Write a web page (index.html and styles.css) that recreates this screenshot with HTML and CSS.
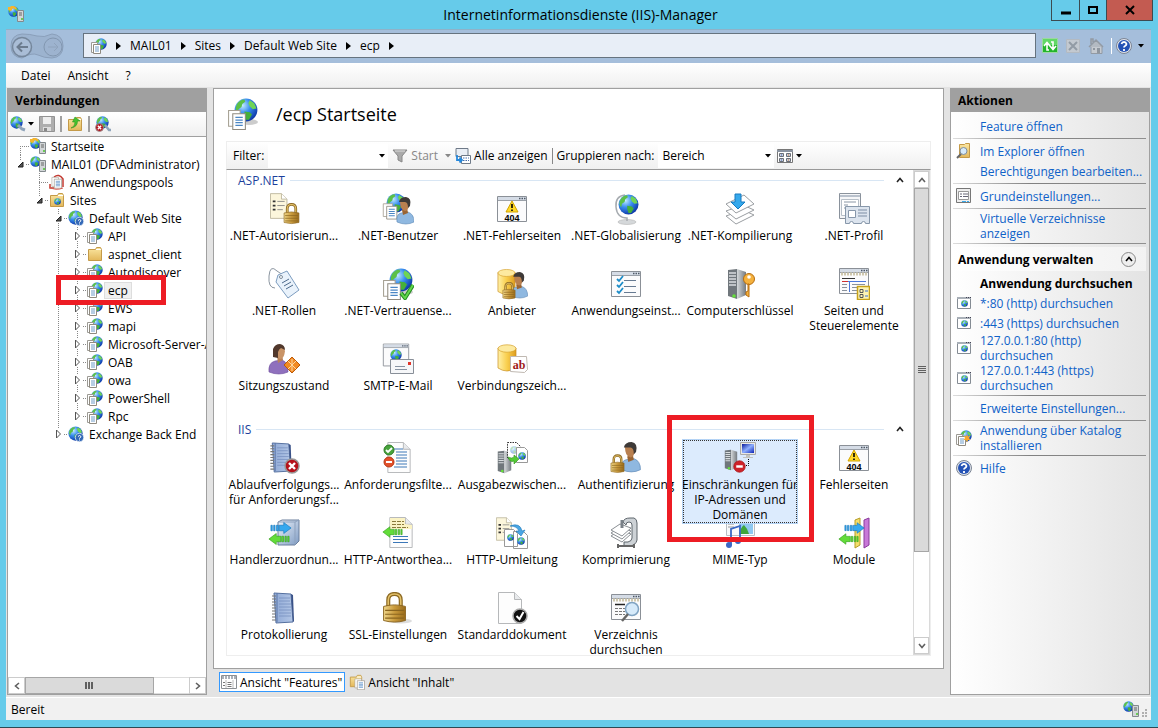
FILE: index.html
```html
<!DOCTYPE html>
<html lang="de">
<head>
    <meta charset="UTF-8">
    <meta name="viewport" content="width=device-width, initial-scale=1.0">
    <title>Internetinformationsdienste (IIS)-Manager</title>
    <link rel="stylesheet" href="styles.css">
</head>
<body>
    <!-- Symbole -->
    <svg class="sprite" aria-hidden="true">
        <defs>
            <radialGradient id="gGlobe" cx="0.35" cy="0.3" r="0.75">
                <stop offset="0" stop-color="#c4ebff"/><stop offset="0.45" stop-color="#3a8ff0"/><stop offset="1" stop-color="#0b34a4"/>
            </radialGradient>
            <linearGradient id="gGold"><stop offset="0" stop-color="#f0d78a"/><stop offset="0.5" stop-color="#c99a3c"/><stop offset="1" stop-color="#9a6c1c"/></linearGradient>
            <linearGradient id="gDb"><stop offset="0" stop-color="#fff0a8"/><stop offset="0.5" stop-color="#f9cf4e"/><stop offset="1" stop-color="#dd9c1e"/></linearGradient>
            <linearGradient id="gServer"><stop offset="0" stop-color="#d4d8da"/><stop offset="1" stop-color="#747a80"/></linearGradient>
            <linearGradient id="gBook"><stop offset="0" stop-color="#8fa9d6"/><stop offset="1" stop-color="#b4c7e6"/></linearGradient>
            <linearGradient id="gFolder" x2="0" y2="1"><stop offset="0" stop-color="#fbe7a2"/><stop offset="1" stop-color="#e3b75a"/></linearGradient>
            <linearGradient id="gBox" x2="1" y2="1"><stop offset="0" stop-color="#eef3fa"/><stop offset="1" stop-color="#7f9cc4"/></linearGradient>
            <linearGradient id="gScreen" x2="1" y2="1"><stop offset="0" stop-color="#0a1a9c"/><stop offset="0.5" stop-color="#8fb0ff"/><stop offset="1" stop-color="#0b22b4"/></linearGradient>
        </defs>
        <symbol id="globe" viewBox="0 0 16 16">
            <circle cx="8" cy="8" r="7.6" fill="url(#gGlobe)"/>
            <path d="M2 4Q4 1 7 1L7.500 2.500 5.500 4 5 6 3 7.500 2.500 10Q0 8 2 4z" fill="#5cc048"/>
            <path d="M10.500 1.500l3 2 1.500 3.500-2.500 0.500-2-2-1-2z" fill="#6fd455"/>
            <path d="M7 9l3.500 0.500 1.500 1.500-2 3.500-2 0-1-3z" fill="#46b03a"/>
        </symbol>
        <symbol id="pages" viewBox="0 0 20 20">
            <path d="M1.500 1.500h11v15h-11z" fill="#fff" stroke="#a6a093"/>
            <path d="M5.500 4.500h12v15h-12z" fill="#fff" stroke="#8f8a80"/>
            <path d="M8 8h7M8 10.500h7M8 13h7M8 15.500h7" stroke="#4b86c4" stroke-width="1.200"/>
        </symbol>
        <symbol id="app" viewBox="0 0 32 32">
            <ellipse cx="22" cy="24" rx="9" ry="3" fill="#ccc"/>
            <use href="#globe" x="7" y="0" width="24" height="24"/>
            <use href="#pages" x="0" y="11" width="21" height="21"/>
        </symbol>
        <symbol id="appSmall" viewBox="0 0 16 16">
            <use href="#globe" x="4" y="0" width="12" height="12"/>
            <path d="M0.500 4.500h6v10h-6z" fill="#fff" stroke="#9c9a94"/>
            <path d="M2.500 6.500h7v9h-7z" fill="#fff" stroke="#8f8a80"/>
            <path d="M4 9h4M4 11h4M4 13h4" stroke="#6f9cc8"/>
        </symbol>
        <symbol id="server" viewBox="0 0 20 32">
            <path d="M1 2l9-1v30l-9-3z" fill="#70777c"/>
            <path d="M10 1l9 3v23l-9 4z" fill="url(#gServer)"/>
            <path d="M2 5h7M2 8h7M2 11h7M2 14h7M2 17h7" stroke="#d9dddf" stroke-width="1.500"/>
            <circle cx="7" cy="28" r="1.800" fill="#64e03a"/>
        </symbol>
        <symbol id="serverGlobe" viewBox="0 0 16 16">
            <use href="#globe" x="0" y="0" width="11" height="11"/>
            <path d="M9.500 4.500h6v11h-6z" fill="#d2d6d8" stroke="#83898d"/>
            <path d="M11 7h3M11 9h3" stroke="#666"/><path d="M13 13h2" stroke="#48c52c" stroke-width="1.500"/>
        </symbol>
        <symbol id="start" viewBox="0 0 16 16">
            <use href="#serverGlobe" width="16" height="16"/>
            <path d="M0 4V1h2l1-1h3l3 2-2 1.500-2-1.500-2 3z" fill="#f5b52e"/>
        </symbol>
        <symbol id="site" viewBox="0 0 16 16">
            <use href="#globe" width="15" height="15"/>
            <circle cx="11.500" cy="11.500" r="4.200" fill="#3469b8" stroke="#dfe8f5" stroke-width="0.800"/>
            <path d="M10 10.500q1.500-2 3 0q0 1-1.500 1.500v0.500M11.500 13.500v1" stroke="#fff" fill="none"/>
        </symbol>
        <symbol id="folder" viewBox="0 0 16 16">
            <path d="M1.500 3.500h7l1-2h4l1 2v11h-13z" fill="url(#gFolder)" stroke="#c49a48"/>
            <path d="M9 3.500h5" stroke="#fff"/>
        </symbol>
        <symbol id="folderGlobe" viewBox="0 0 16 16">
            <use href="#folder" width="16" height="16"/><use href="#globe" x="5" y="6" width="7" height="7"/>
        </symbol>
        <symbol id="pool" viewBox="0 0 16 16">
            <path d="M5 3q5-4 9 2v8M1 10v4h4" fill="none" stroke="#c33b32" stroke-width="1.500"/>
            <use href="#pages" x="2" y="2" width="12" height="13"/><path d="M0 13q7 4 14 1" fill="none" stroke="#d45a50"/>
        </symbol>
        <symbol id="lock" viewBox="0 0 16 20">
            <path d="M4 10V5q0-4 4-4t4 4v5" fill="none" stroke="#8d6a24" stroke-width="2.600"/>
            <path d="M4 10V5q0-4 4-4t4 4v5" fill="none" stroke="#e3c169" stroke-width="1"/>
            <path d="M1 9q7-2 14 0v9q-7 2-14 0z" fill="url(#gGold)" stroke="#8a6420" stroke-width="0.600"/>
            <path d="M2 11.500h12M2 14h12M2 16.500h12" stroke="#8a651f" stroke-width="0.700"/>
        </symbol>
        <symbol id="user" viewBox="0 0 20 28">
            <path d="M2 25q-1-8 4-9l7-1q6 2 6 10-8 4-17 0z" fill="#8fb8e0" stroke="#5d88b5" stroke-width="0.600"/>
            <path d="M7 13l1 5 5-2-1-5z" fill="#9a6432"/>
            <path d="M5 4q1-3 5-3 5 1 4 7-1 6-4 6-5-1-5-10z" fill="#b98050"/>
            <path d="M4 5q1-5 7-5 6 1 4 9l-2 2q0-6-3-6z" fill="#3e3a38"/>
        </symbol>
        <symbol id="db" viewBox="0 0 20 28">
            <path d="M1 4v20q9 6 18 0V4z" fill="url(#gDb)" stroke="#c98e1c" stroke-width="0.700"/>
            <ellipse cx="10" cy="4.500" rx="9" ry="3.700" fill="#fdeaa0" stroke="#d6a22e" stroke-width="0.700"/>
        </symbol>
        <symbol id="window" viewBox="0 0 32 26">
            <path d="M1.500 0.500h29v25h-29z" fill="#fbfbfc" stroke="#8b9097"/>
            <path d="M2 1h28v3h-28z" fill="#d5dce6"/><path d="M2 4.500h28" stroke="#9aa0a8"/>
            <path d="M23 2.500h1.500M25.500 2.500h1.500M28 2.500h1.500" stroke="#4e5866" stroke-width="1.500"/>
        </symbol>
        <symbol id="error404" viewBox="0 0 32 32">
            <use href="#window" y="3" width="32" height="26"/>
            <path d="M16 8l6 11h-12z" fill="#ffd928" stroke="#d3a400" stroke-linejoin="round"/><path d="M16 11v4M16 16.500v1.500" stroke="#000" stroke-width="1.600"/>
            <text x="16" y="28" text-anchor="middle" class="icon-404">404</text>
        </symbol>
        <symbol id="doc" viewBox="0 0 24 32">
            <path d="M0.500 0.500h16l7 7v24h-23z" fill="#fdfdfd" stroke="#b6b8ba"/><path d="M16.500 0.500v7h7" fill="#e8eaec" stroke="#b6b8ba"/>
        </symbol>
        <symbol id="docList" viewBox="0 0 24 28">
            <path d="M0.500 0.500h12l6 6v21h-18z" fill="#fcf6dc" stroke="#bdb79e"/><path d="M12.500 0.500v6h6" fill="#fff" stroke="#bdb79e"/>
            <path d="M3 9h3M3 13.500h3M3 18h3" stroke="#333" stroke-width="2"/><path d="M8 9h8M8 13.500h8M8 18h6" stroke="#8a8a88"/>
        </symbol>
        <symbol id="notebook" viewBox="0 0 24 32">
            <path d="M3 1l17 1 2 28-17 1z" fill="url(#gBook)" stroke="#55709f"/>
            <path d="M6 1v29" stroke="#5a76a8"/><path d="M8 6h11M8 9h11M8 12h12M8 15h12M8 18h12M8 21h12M8 24h12" stroke="#7790bf" stroke-width="0.800"/>
            <path d="M1 4h4M1 7h4M1 10h4M1 13h4M1 16h4M1 19h4M1 22h4M1 25h4M1 28h4" stroke="#777" stroke-width="1.200"/>
            <path d="M20 2l2 1 1 26-1 1z" fill="#3a5288"/>
        </symbol>
        <symbol id="arrowRight" viewBox="0 0 24 14">
            <path d="M10 4h5V1l8 6-8 6v-3h-5zM1 4h1.500v6h-1.500zM4 4h1.500v6h-1.500zM7 4h2v6h-2z" fill="#35a8ee" stroke="#1677bd" stroke-width="0.700"/>
        </symbol>
        <symbol id="arrowLeft" viewBox="0 0 24 14">
            <path d="M14 4h-5V1l-8 6 8 6v-3h5zM21.500 4h1.500v6h-1.500zM18.500 4h1.500v6h-1.500zM15 4h2v6h-2z" fill="#63dc3a" stroke="#33a01c" stroke-width="0.700"/>
        </symbol>
        <symbol id="browse" viewBox="0 0 16 16">
            <path d="M1.500 2.500h13v11h-13z" fill="#fff" stroke="#858c94"/><path d="M1 2h14v2h-14z" fill="#a9b0b8"/>
            <path d="M10 2.500h1M12 2.500h1M14 2.500h1" stroke="#445"/><use href="#globe" x="5" y="5" width="7" height="7"/>
        </symbol>
        <symbol id="help" viewBox="0 0 16 16">
            <circle cx="8" cy="8" r="7.500" fill="#dfe4ec" stroke="#7c8594"/><circle cx="8" cy="8" r="6" fill="#2452b5"/>
            <path d="M5.500 6q0.500-2 2.500-2t2.500 2q0 1-1.500 2-1 0.500-1 1.500M8 11v2" fill="none" stroke="#fff" stroke-width="1.800"/>
        </symbol>
        <symbol id="caret" viewBox="0 0 6 4"><path d="M0 0h6l-3 3.500z" fill="currentColor"/></symbol>
        <symbol id="crumb" viewBox="0 0 5 8"><path d="M0 0l5 4-5 4z" fill="#000"/></symbol>
        <symbol id="chevron" viewBox="0 0 8 6"><path d="M1 5l3-3.500L7 5" fill="none" stroke="currentColor" stroke-width="1.600"/></symbol>
        <symbol id="closed" viewBox="0 0 7 10"><path d="M1.500 1l4 4-4 4z" fill="#fff" stroke="#555"/></symbol>
        <symbol id="opened" viewBox="0 0 7 7"><path d="M6 1v5H1z" fill="#555" stroke="#222"/></symbol>
        <symbol id="errorBadge" viewBox="0 0 16 16">
            <circle cx="8" cy="8" r="7" fill="#b5121b" stroke="#999" stroke-width="1.500"/><path d="M5 5l6 6M11 5l-6 6" stroke="#fff" stroke-width="2.400"/>
        </symbol>
        <symbol id="minusBadge" viewBox="0 0 16 16"><circle cx="8" cy="8" r="7" fill="#cf2229" stroke="#a81a1e"/><path d="M4 8h8" stroke="#fff" stroke-width="3"/></symbol>
    </svg>

    <header class="titlebar">
        <svg class="icon title-icon"><use href="#start"/></svg>
        <h1 class="title">Internetinformationsdienste (IIS)-Manager</h1>
        <div class="window-buttons">
            <button class="win-btn" aria-label="Minimieren"><svg width="10" height="10"><path d="M0 8h10" stroke="#000" stroke-width="3"/></svg></button>
            <button class="win-btn" aria-label="Maximieren"><svg width="10" height="10"><path d="M1 2h8v6h-8z" fill="none" stroke="#000" stroke-width="2"/></svg></button>
            <button class="win-btn close" aria-label="Schließen"><svg width="10" height="10"><path d="M1 1l8 8M9 1l-8 8" stroke="#000" stroke-width="2"/></svg></button>
        </div>
    </header>

    <div class="window">
        <nav class="navbar">
            <svg class="history" viewBox="0 0 54 26" role="img" aria-label="Zurück und Vorwärts">
                <path d="M12 1q8 0 15 2t15-2q11 1 11 12T42 25q-8 0-14-3t-16 3Q1 24 1 13T12 1z" fill="#9cb3cf" stroke="#8a9fba"/>
                <circle cx="12" cy="14" r="9.500" fill="#a9bdd6" stroke="#75879c" stroke-width="1.500"/><path d="M18 14H8M12 9.500L7.500 14l4.500 4.500" fill="none" stroke="#6b7b8e" stroke-width="2"/>
                <circle cx="43" cy="14" r="9" fill="#9db3cf" stroke="#8297b0"/><path d="M38 14h9M44 10l4 4-4 4" fill="none" stroke="#8fa3bc"/>
            </svg>
            <div class="address">
                <svg class="icon"><use href="#appSmall"/></svg>
                <svg class="crumb"><use href="#crumb"/></svg><span>MAIL01</span>
                <svg class="crumb"><use href="#crumb"/></svg><span>Sites</span>
                <svg class="crumb"><use href="#crumb"/></svg><span>Default Web Site</span>
                <svg class="crumb"><use href="#crumb"/></svg><span>ecp</span>
                <svg class="crumb"><use href="#crumb"/></svg>
            </div>
            <div class="nav-tools">
                <button class="tool" aria-label="Aktualisieren"><svg class="icon" viewBox="0 0 16 16"><path d="M0.500 0.500h15v14h-15z" fill="#24b52c" stroke="#9bd8a0"/><path d="M1 1h14v6h-14z" fill="#62d867"/><path d="M7 12H5V5M2 8l3-3.500L8 8M9 4h2v7M8 8l3 3.500L14 8" fill="none" stroke="#fff" stroke-width="1.600"/></svg></button>
                <button class="tool" aria-label="Anhalten"><svg class="icon" viewBox="0 0 16 16"><path d="M1.500 1.500h13v13h-13z" fill="#c3c9d0" stroke="#b3bac2"/><path d="M4 4l8 8M12 4l-8 8" stroke="#929ba5" stroke-width="2"/></svg></button>
                <button class="tool" aria-label="Startseite"><svg class="icon" viewBox="0 0 16 16"><path d="M3 8h11v7.500H3z" fill="#c5cad0" stroke="#929aa4"/><path d="M1 9l7-7 7 7M3 6V1h2v3" fill="#b3bac2" stroke="#929aa4" stroke-width="1.500"/><path d="M5 10h2v2h-2zM9 10h3v5h-3z" fill="#8e969f"/></svg></button>
                <button class="tool help-tool" aria-label="Hilfe"><svg class="icon"><use href="#help"/></svg><svg class="caret"><use href="#caret"/></svg></button>
            </div>
        </nav>

        <div class="menubar">
            <button class="menu">Datei</button>
            <button class="menu">Ansicht</button>
            <button class="menu">?</button>
        </div>

        <main class="workspace">
            <!-- Verbindungen -->
            <aside class="panel connections">
                <h2 class="panel-title">Verbindungen</h2>
                <div class="tree-tools">
                    <button class="tool" aria-label="Verbinden"><svg class="icon" viewBox="0 0 16 16"><use href="#globe" width="13" height="13"/><path d="M8 9l4 4 3 1" fill="none" stroke="#8fa4ba" stroke-width="3"/></svg><svg class="caret"><use href="#caret"/></svg></button>
                    <button class="tool" aria-label="Speichern"><svg class="icon" viewBox="0 0 16 16"><path d="M0.500 0.500h15v15h-15z" fill="#aeaeae" stroke="#929292"/><path d="M4 1h8v7h-8z" fill="#eee"/><path d="M4 11h8v4h-8z" fill="#ddd"/><path d="M5 12h3v3h-3z" fill="#888"/></svg></button>
                    <span class="divider"></span>
                    <button class="tool" aria-label="Nach oben"><svg class="icon" viewBox="0 0 16 16"><use href="#folder" width="16" height="16"/><path d="M4 12q4-1 4-6H5.500L8 1l5 4H10.500q0 6-6.500 7z" fill="#46c22e" stroke="#2d941c" stroke-width="0.600"/></svg></button>
                    <span class="divider"></span>
                    <button class="tool" aria-label="Verbindung trennen"><svg class="icon" viewBox="0 0 16 16"><use href="#globe" x="1" width="13" height="13"/><path d="M10 9l4 5 2 0" fill="none" stroke="#8fa4ba" stroke-width="2.500"/><use href="#errorBadge" y="7" width="9" height="9"/></svg></button>
                </div>
                <div class="tree">
                    <ul class="tree-root">
                        <li><div class="row leaf"><span class="twist"></span><svg class="icon"><use href="#start"/></svg><span class="name">Startseite</span></div></li>
                        <li>
                            <div class="row"><span class="twist"><svg class="opened"><use href="#opened"/></svg></span><svg class="icon"><use href="#serverGlobe"/></svg><span class="name">MAIL01 (DF\Administrator)</span></div>
                            <ul>
                                <li><div class="row leaf"><span class="twist"></span><svg class="icon"><use href="#pool"/></svg><span class="name">Anwendungspools</span></div></li>
                                <li>
                                    <div class="row"><span class="twist"><svg class="opened"><use href="#opened"/></svg></span><svg class="icon"><use href="#folderGlobe"/></svg><span class="name">Sites</span></div>
                                    <ul>
                                        <li>
                                            <div class="row"><span class="twist"><svg class="opened"><use href="#opened"/></svg></span><svg class="icon"><use href="#site"/></svg><span class="name">Default Web Site</span></div>
                                            <ul>
                                                <li><div class="row"><span class="twist"><svg class="closed"><use href="#closed"/></svg></span><svg class="icon"><use href="#appSmall"/></svg><span class="name">API</span></div></li>
                                                <li><div class="row"><span class="twist"><svg class="closed"><use href="#closed"/></svg></span><svg class="icon"><use href="#folder"/></svg><span class="name">aspnet_client</span></div></li>
                                                <li><div class="row"><span class="twist"><svg class="closed"><use href="#closed"/></svg></span><svg class="icon"><use href="#appSmall"/></svg><span class="name">Autodiscover</span></div></li>
                                                <li><div class="row marked"><span class="twist"><svg class="closed"><use href="#closed"/></svg></span><svg class="icon"><use href="#appSmall"/></svg><span class="name current">ecp</span></div></li>
                                                <li><div class="row"><span class="twist"><svg class="closed"><use href="#closed"/></svg></span><svg class="icon"><use href="#appSmall"/></svg><span class="name">EWS</span></div></li>
                                                <li><div class="row"><span class="twist"><svg class="closed"><use href="#closed"/></svg></span><svg class="icon"><use href="#appSmall"/></svg><span class="name">mapi</span></div></li>
                                                <li><div class="row"><span class="twist"><svg class="closed"><use href="#closed"/></svg></span><svg class="icon"><use href="#appSmall"/></svg><span class="name">Microsoft-Server-A</span></div></li>
                                                <li><div class="row"><span class="twist"><svg class="closed"><use href="#closed"/></svg></span><svg class="icon"><use href="#appSmall"/></svg><span class="name">OAB</span></div></li>
                                                <li><div class="row"><span class="twist"><svg class="closed"><use href="#closed"/></svg></span><svg class="icon"><use href="#appSmall"/></svg><span class="name">owa</span></div></li>
                                                <li><div class="row"><span class="twist"><svg class="closed"><use href="#closed"/></svg></span><svg class="icon"><use href="#appSmall"/></svg><span class="name">PowerShell</span></div></li>
                                                <li><div class="row"><span class="twist"><svg class="closed"><use href="#closed"/></svg></span><svg class="icon"><use href="#appSmall"/></svg><span class="name">Rpc</span></div></li>
                                            </ul>
                                        </li>
                                        <li><div class="row"><span class="twist"><svg class="closed"><use href="#closed"/></svg></span><svg class="icon"><use href="#site"/></svg><span class="name">Exchange Back End</span></div></li>
                                    </ul>
                                </li>
                            </ul>
                        </li>
                    </ul>
                </div>
                <div class="scroll-x">
                    <button class="scroll-btn" aria-label="Nach links"><svg class="chevron left"><use href="#chevron"/></svg></button>
                    <div class="thumb"><i class="grip"></i></div>
                    <div class="track"></div>
                    <button class="scroll-btn" aria-label="Nach rechts"><svg class="chevron right"><use href="#chevron"/></svg></button>
                </div>
            </aside>

            <section class="center">
                <div class="panel content">
                    <div class="page-head">
                        <svg class="icon-lg"><use href="#app"/></svg>
                        <h2 class="page-title">/ecp Startseite</h2>
                    </div>
                    <div class="filterbar">
                        <label for="filter">Filter:</label>
                        <div class="combo filter-combo"><input id="filter" type="text"><svg class="caret"><use href="#caret"/></svg></div>
                        <button class="tool start" disabled><svg class="icon" viewBox="0 0 16 16"><path d="M1 2h14l-5 6v6l-4-2V8z" fill="#aaa" stroke="#888"/><path d="M3 3h10" stroke="#ddd"/></svg>Start<svg class="caret"><use href="#caret"/></svg></button>
                        <button class="tool show-all"><svg class="icon" viewBox="0 0 16 16"><path d="M1 0.500h12v8h-12z" fill="#e9eef5" stroke="#6f7a88"/><path d="M6.500 7.500h9v8h-9z" fill="#fff" stroke="#6f7a88"/><path d="M8 10h6M8 12.500h6" stroke="#4a6ea8" stroke-dasharray="1.500 1"/><path d="M2 7v5h4M4.500 9.500L7 12l-2.500 2.500" fill="none" stroke="#2688dc" stroke-width="1.800"/></svg>Alle anzeigen</button>
                        <span class="divider"></span>
                        <label for="group">Gruppieren nach:</label>
                        <div class="combo group-combo"><select id="group"><option>Bereich</option></select><svg class="caret"><use href="#caret"/></svg></div>
                        <button class="tool" aria-label="Ansicht"><svg class="icon" viewBox="0 0 16 16"><path d="M0.500 1.500h15v13h-15z" fill="#fff" stroke="#777"/><path d="M0 3h16" stroke="#8a93a0" stroke-width="2"/><path d="M2.500 5.500h4v3h-4zM9.500 5.500h4v3h-4zM2.500 10.500h4v3h-4zM9.500 10.500h4v3h-4z" fill="#c9cfd8" stroke="#6a6f78"/><path d="M4 7h1M4 12h1" stroke="#3c64c8"/><path d="M11 7h1M11 12h1" stroke="#d2793a"/></svg><svg class="caret"><use href="#caret"/></svg></button>
                    </div>

                    <div class="feature-view">
                        <div class="features">
                            <section class="group">
                                <h3 class="group-title"><span>ASP.NET</span><svg class="chevron"><use href="#chevron"/></svg></h3>
                                <div class="items">
                                    <div class="item"><svg class="icon-lg" viewBox="0 0 32 32"><use href="#docList" x="2" width="22" height="26"/><use href="#lock" x="15" y="10" width="17" height="22"/></svg><span class="label">.NET-Autorisierun...</span></div>
                                    <div class="item"><svg class="icon-lg" viewBox="0 0 32 32"><use href="#globe" x="4" width="20" height="20"/><use href="#pages" x="0" y="9" width="17" height="18"/><use href="#user" x="13" y="4" width="20" height="28"/></svg><span class="label">.NET-Benutzer</span></div>
                                    <div class="item"><svg class="icon-lg"><use href="#error404"/></svg><span class="label">.NET-Fehlerseiten</span></div>
                                    <div class="item"><svg class="icon-lg" viewBox="0 0 32 32"><ellipse cx="17" cy="29" rx="9" ry="2.500" fill="#d5d8da" stroke="#aaa" stroke-width="0.500"/><path d="M15 2Q5 3 6 14t11 11v3" fill="none" stroke="#a6abb0" stroke-width="1.500"/><use href="#globe" x="8" y="1" width="21" height="21"/></svg><span class="label">.NET-Globalisierung</span></div>
                                    <div class="item"><svg class="icon-lg" viewBox="0 0 32 32"><g fill="#fff" stroke="#9a9ea2"><path d="M2 23l17-6 11 5-18 9z"/><path d="M2 18l17-6 11 5-18 9z"/><path d="M2 11l18-9 10 9-18 9z"/></g><path d="M11 1h6v8h4l-7 7-7-7h4z" fill="#36a9ec" stroke="#167ac0"/></svg><span class="label">.NET-Kompilierung</span></div>
                                    <div class="item"><svg class="icon-lg" viewBox="0 0 32 32"><path d="M1.500 0.500h21v25h-21z" fill="#f5f6f8" stroke="#8a929c"/><path d="M2 3h20" stroke="#b9c1cc" stroke-width="2"/><path d="M3.500 6.500h17v16h-17z" fill="#fff" stroke="#b7bfc8"/><path d="M6 9h12M6 12h4M6 15h4" stroke="#8a96a5"/><path d="M7.500 13.500h24v17h-4q0-2-2-2t-2 2h-8q0-2-2-2t-2 2h-4z" fill="#dce4ee" stroke="#8797aa"/><path d="M10.500 17.500h7v7h-7z" fill="#fff" stroke="#8797aa"/><path d="M20 17h9M20 20h9M20 23h9" stroke="#7d8da4"/></svg><span class="label">.NET-Profil</span></div>
                                    <div class="item"><svg class="icon-lg" viewBox="0 0 32 32"><path d="M7 20Q0 20 1 8T9 3l6 4" fill="none" stroke="#8b95a0"/><path d="M10 7l9-4 12 19-11 8L8 14z" fill="#e9f2fb" stroke="#7d9dc0"/><circle cx="13" cy="9" r="1.500" fill="#fff" stroke="#7d8b99"/><path d="M14 15l7-4M16 18l7-4M18 21l7-4" stroke="#4d6a8c"/></svg><span class="label">.NET-Rollen</span></div>
                                    <div class="item"><svg class="icon-lg" viewBox="0 0 32 32"><use href="#app" width="32" height="32"/><path d="M19 25l4 5 8-13" fill="none" stroke="#238a1f" stroke-width="4"/><path d="M19 25l4 5 8-13" fill="none" stroke="#62d64c" stroke-width="2"/></svg><span class="label">.NET-Vertrauense...</span></div>
                                    <div class="item"><svg class="icon-lg" viewBox="0 0 32 32"><use href="#db" x="1" width="19" height="28"/><use href="#user" x="13" y="4" width="20" height="27"/><use href="#lock" x="6" y="14" width="14" height="18"/></svg><span class="label">Anbieter</span></div>
                                    <div class="item"><svg class="icon-lg" viewBox="0 0 32 32"><use href="#window" y="3" width="32" height="26"/><path d="M7 11l2 2 4-5M7 17l2 2 4-5M7 23l2 2 4-5" fill="none" stroke="#1c8cc8" stroke-width="1.800"/><path d="M14 12.500h12M14 18.500h12M14 24.500h12" stroke="#667a92"/></svg><span class="label">Anwendungseinst...</span></div>
                                    <div class="item"><svg class="icon-lg" viewBox="0 0 32 32"><use href="#server" x="2" width="22" height="32"/><circle cx="25" cy="11" r="5.500" fill="#f4b13d" stroke="#b86e10"/><circle cx="25" cy="9" r="1.800" fill="#fff"/><path d="M25 16v13l-3-2v-3l2-1v-7z" fill="#f4b13d" stroke="#b86e10"/></svg><span class="label">Computerschlüssel</span></div>
                                    <div class="item"><svg class="icon-lg" viewBox="0 0 32 32"><use href="#window" width="32" height="26"/><path d="M3 6h27" stroke="#cfc8ae" stroke-width="3" stroke-dasharray="2 1"/><path d="M4 10.500h13" stroke="#333"/><path d="M4 13.500h6" stroke="#d03030"/><path d="M10 13.500h18M11.500 14v10" stroke="#4a78dc"/><path d="M4 16.500h5M4 19.500h5M4 22.500h5M14 16.500h13M14 19.500h6M14 22.500h5" stroke="#8a929c"/><path d="M19.500 18.500h12v13h-12z" fill="#fdf4b4" stroke="#c8a21a" stroke-width="1.500"/><path d="M22 21.500h3v3h-3zM22 26.500h3v3h-3z" fill="none" stroke="#555"/><path d="M27 23h3M27 28h3" stroke="#3b6fd0"/></svg><span class="label">Seiten und<br>Steuerelemente</span></div>
                                    <div class="item"><svg class="icon-lg" viewBox="0 0 32 32"><path d="M1 29q-1-9 6-11l7-1q6 2 6 12-9 4-19 0z" fill="#8f70bd" stroke="#6b4c9c" stroke-width="0.600"/><path d="M9 13l1 7 5-3-1-5z" fill="#b98258"/><path d="M8 5q7-3 9 3-1 8-5 8-5-3-4-11z" fill="#c99467"/><path d="M5 14q0-3 0-8 2-5 7-5 5 1 5 6l-4-2q-2 1-3 4l0 6z" fill="#51382c"/><path d="M24 14l8 8-8 8-8-8z" fill="#f28b24" stroke="#bd5a08"/><path d="M20 18l8 8M28 18l-8 8M24 16v12" stroke="#fcd7a4"/></svg><span class="label">Sitzungszustand</span></div>
                                    <div class="item"><svg class="icon-lg" viewBox="0 0 32 32"><use href="#window" width="28" height="24"/><use href="#globe" x="8" y="6" width="12" height="12"/><path d="M8.500 16.500h23v14h-23z" fill="#f6f7f9" stroke="#888f98"/><path d="M26 19h3v3h-3z" fill="#e0352a"/><path d="M13 23.500h10M13 26.500h12" stroke="#8793a2"/></svg><span class="label">SMTP-E-Mail</span></div>
                                    <div class="item"><svg class="icon-lg" viewBox="0 0 32 32"><use href="#db" x="1" width="20" height="30"/><path d="M14.500 13.500h16l1 13-3 3-14-1z" fill="#fff" stroke="#c0b9b2"/><text x="23" y="26" text-anchor="middle" class="icon-ab">ab</text></svg><span class="label">Verbindungszeich...</span></div>
                                </div>
                            </section>
                            <section class="group">
                                <h3 class="group-title"><span>IIS</span><svg class="chevron"><use href="#chevron"/></svg></h3>
                                <div class="items">
                                    <div class="item"><svg class="icon-lg" viewBox="0 0 32 32"><use href="#notebook" x="1" width="24" height="31"/><use href="#errorBadge" x="16" y="16" width="16" height="16"/></svg><span class="label">Ablaufverfolgungs...<br>für Anforderungsf...</span></div>
                                    <div class="item"><svg class="icon-lg" viewBox="0 0 32 32"><use href="#doc" x="5" width="24" height="31"/><path d="M12 7h9M14 10h11M14 13h11M14 16h11M14 19h11M14 22h11M12 25h13" stroke="#3c78b8"/><circle cx="7" cy="8" r="5" fill="#48a43c" stroke="#2c7a26"/><path d="M4 8l2 2 4-4" fill="none" stroke="#fff" stroke-width="1.800"/><circle cx="7" cy="20" r="5" fill="#e2502a" stroke="#b83714"/><path d="M4 20h6" stroke="#fff" stroke-width="2"/></svg><span class="label">Anforderungsfilte...</span></div>
                                    <div class="item"><svg class="icon-lg" viewBox="0 0 32 32"><use href="#server" y="8" width="17" height="24"/><path d="M11.500 0.500h9l4 4v12h-13z" fill="#fff" stroke="#333" stroke-dasharray="1.500 1"/><use href="#globe" x="14" y="4" width="8" height="8" opacity="0.400"/><path d="M20.500 5.500h8l3 3v12h-11z" fill="#fff" stroke="#999"/><use href="#globe" x="22" y="10" width="8" height="8"/><path d="M12 15q4 2 6 0v-2l5 4-5 5v-3q-4 2-6-4z" fill="#54ca36" stroke="#2f901e" stroke-width="0.600"/></svg><span class="label">Ausgabezwischen...</span></div>
                                    <div class="item"><svg class="icon-lg" viewBox="0 0 32 32"><use href="#user" x="9" y="0" width="23" height="31"/><use href="#lock" x="0" y="12" width="15" height="20"/></svg><span class="label">Authentifizierung</span></div>
                                    <div class="item selected"><svg class="icon-lg" viewBox="0 0 32 32"><use href="#server" y="7" width="14" height="22"/><path d="M16.500 0.500h15v12h-15z" fill="#e8e8e4" stroke="#aaa"/><path d="M18 2h12v9h-12z" fill="url(#gScreen)"/><path d="M22 13h4v2h3v1h-10v-1h3z" fill="#c3c3bd"/><path d="M24.500 17v6.500H19" fill="none" stroke="#000" stroke-dasharray="1 1"/><use href="#minusBadge" x="9" y="18" width="13" height="13"/></svg><span class="label">Einschränkungen für<br>IP-Adressen und<br>Domänen</span></div>
                                    <div class="item"><svg class="icon-lg"><use href="#error404"/></svg><span class="label">Fehlerseiten</span></div>
                                    <div class="item"><svg class="icon-lg" viewBox="0 0 32 32"><path d="M10 5l4-2h17v21l-4 4H10z" fill="url(#gBox)" stroke="#6a7f9c"/><path d="M10 5h17v23M27 5l4-2" fill="none" stroke="#8da1bd"/><use href="#arrowRight" x="2" y="4" width="22" height="14"/><use href="#arrowLeft" x="0" y="15" width="22" height="14"/></svg><span class="label">Handlerzuordnun...</span></div>
                                    <div class="item"><svg class="icon-lg" viewBox="0 0 32 32"><use href="#doc" x="7" width="24" height="31"/><path d="M8 1h15v6l7 1v4H8z" fill="#fbf3c4"/><path d="M10 4.500h12M10 7.500h12M10 10.500h16" stroke="#8a7a3a" stroke-dasharray="4 1"/><path d="M11 19.500h15M11 22.500h15M11 25.500h15" stroke="#3c78b8"/><use href="#arrowLeft" x="0" y="8" width="21" height="14"/></svg><span class="label">HTTP-Antworthea...</span></div>
                                    <div class="item"><svg class="icon-lg" viewBox="0 0 32 32"><use href="#docList" width="20" height="24"/><path d="M8.500 12.500h9l4 4v13h-13zM17.500 14.500h10l4 4v13h-14z" fill="#fff" stroke="#999"/><use href="#globe" x="11" y="17" width="7" height="7"/><use href="#globe" x="21" y="20" width="8" height="8"/><path d="M14 9q10-4 12 5l3-1-4 6-5-5 3 0q-2-5-9-5z" fill="#4aa6e4" stroke="#1e78b8" stroke-width="0.600"/></svg><span class="label">HTTP-Umleitung</span></div>
                                    <div class="item"><svg class="icon-lg" viewBox="0 0 32 32"><path d="M13 5q1-4 7-4h4q3 1 3 5v17q-1 5-7 6h-6v-4h4q4-1 4-4V8q0-3-3-3t-3 3z" fill="#cdd2d6" stroke="#5f666d"/><g fill="#fff" stroke="#8a8f94"><path d="M1 19l9-6 11 4-9 8z"/><path d="M1 16l9-6 11 4-9 8z"/><path d="M1 13l9-6 11 4-9 8z"/></g><path d="M12 3v8" stroke="#7a8188" stroke-width="3"/><path d="M7 29h17M8 27v4M24 27v4" stroke="#666" stroke-width="2"/></svg><span class="label">Komprimierung</span></div>
                                    <div class="item"><svg class="icon-lg" viewBox="0 0 32 32"><path d="M2.500 0.500h28v18h-28z" fill="#f8f9fa" stroke="#b9bec4"/><path d="M15 6h14v11h-14z" fill="#8fc8f0"/><path d="M15 17q2-7 5-9 4 4 5 9z" fill="#3fa53a"/><path d="M4 7h6M4 10h6" stroke="#999"/><circle cx="5" cy="28" r="3" fill="#3b68c4"/><circle cx="14" cy="24" r="3" fill="#3b68c4"/><path d="M7 28V12l9-3v15" fill="none" stroke="#3b68c4" stroke-width="1.800"/></svg><span class="label">MIME-Typ</span></div>
                                    <div class="item"><svg class="icon-lg" viewBox="0 0 32 32"><path d="M17 3l5-2v27l-5 3z" fill="#f4de6a" stroke="#b59c28"/><path d="M26 3l5-2v27l-5 3z" fill="#c878d8" stroke="#8a3a9c"/><use href="#arrowRight" x="6" y="4" width="21" height="14"/><use href="#arrowLeft" x="0" y="15" width="21" height="14"/></svg><span class="label">Module</span></div>
                                    <div class="item"><svg class="icon-lg" viewBox="0 0 32 32"><use href="#notebook" x="3" width="24" height="32"/></svg><span class="label">Protokollierung</span></div>
                                    <div class="item"><svg class="icon-lg" viewBox="0 0 32 32"><ellipse cx="19" cy="29" rx="11" ry="2.500" fill="#ddd"/><use href="#lock" x="0" y="0" width="25" height="32"/></svg><span class="label">SSL-Einstellungen</span></div>
                                    <div class="item"><svg class="icon-lg" viewBox="0 0 32 32"><use href="#doc" x="2" width="24" height="32"/><circle cx="24" cy="24" r="7" fill="#111" stroke="#aaa" stroke-width="1.500"/><path d="M20.500 24l3 3 4-7" fill="none" stroke="#fff" stroke-width="2"/></svg><span class="label">Standarddokument</span></div>
                                    <div class="item"><svg class="icon-lg" viewBox="0 0 32 32"><use href="#window" y="2" width="32" height="26"/><path d="M3 8h26" stroke="#cfc8ae" stroke-width="3" stroke-dasharray="2 1"/><path d="M5 12.500h10" stroke="#222" stroke-width="1.500"/><path d="M5 16.500h11M5 19.500h10M5 22.500h10" stroke="#777" stroke-dasharray="3 1"/><circle cx="22" cy="17" r="6.500" fill="#d6eafa" stroke="#7fa3c2" stroke-width="1.500"/><path d="M18 22l-6 7" stroke="#666" stroke-width="2.500"/></svg><span class="label">Verzeichnis<br>durchsuchen</span></div>
                                </div>
                            </section>
                        </div>
                        <div class="scroll-y">
                            <button class="scroll-btn" aria-label="Nach oben"><svg class="chevron"><use href="#chevron"/></svg></button>
                            <div class="thumb"><i class="grip"></i></div>
                            <div class="track"></div>
                            <button class="scroll-btn" aria-label="Nach unten"><svg class="chevron down"><use href="#chevron"/></svg></button>
                        </div>
                    </div>
                </div>
                <div class="view-tabs">
                    <button class="view-tab active"><svg class="icon" viewBox="0 0 16 16"><path d="M0.500 1.500h15v13h-15z" fill="#fff" stroke="#8b8f94"/><path d="M1 3.500h14" stroke="#aab0b8" stroke-width="3" stroke-dasharray="2 1"/><path d="M5 6v8M12 6v8" stroke="#bbb"/><path d="M6.500 8.500h4M6.500 10.500h4M6.500 12.500h4M2 8.500h2M2 11.500h2" stroke="#777"/></svg>Ansicht "Features"</button>
                    <button class="view-tab"><svg class="icon" viewBox="0 0 16 16"><use href="#folder" width="14" height="14"/><use href="#pages" x="5" y="4" width="12" height="12"/></svg>Ansicht "Inhalt"</button>
                </div>
            </section>

            <!-- Aktionen -->
            <aside class="panel actions">
                <h2 class="panel-title">Aktionen</h2>
                <div class="action-list">
                    <a class="action" href="#">Feature öffnen</a>
                    <hr>
                    <a class="action" href="#"><svg class="icon" viewBox="0 0 16 16"><path d="M3.500 1.500h5l1-1h4v14h-10z" fill="url(#gFolder)" stroke="#c49a48"/><circle cx="7.500" cy="8" r="3.500" fill="#d6eafa" stroke="#7d8ea0"/><path d="M5 11l-4 4" stroke="#666" stroke-width="2"/></svg>Im Explorer öffnen</a>
                    <a class="action" href="#">Berechtigungen bearbeiten...</a>
                    <hr>
                    <a class="action" href="#"><svg class="icon" viewBox="0 0 16 16"><path d="M0.500 0.500h14v14h-14z" fill="#eee" stroke="#777"/><path d="M2.500 3.500h10v8h-10z" fill="#fff" stroke="#999"/><path d="M4 6h2M4 8.500h2M7 6h5M7 8.500h5" stroke="#667"/><path d="M6 13.500h4M11 13.500h2" stroke="#36a9ec"/></svg>Grundeinstellungen...</a>
                    <hr>
                    <a class="action" href="#">Virtuelle Verzeichnisse<br>anzeigen</a>
                    <hr>
                    <h3 class="action-head">Anwendung verwalten<button class="collapse" aria-label="Zuklappen"><svg class="chevron"><use href="#chevron"/></svg></button></h3>
                    <h4 class="action action-sub">Anwendung durchsuchen</h4>
                    <a class="action" href="#"><svg class="icon"><use href="#browse"/></svg>*:80 (http) durchsuchen</a>
                    <a class="action" href="#"><svg class="icon"><use href="#browse"/></svg>:443 (https) durchsuchen</a>
                    <a class="action" href="#"><svg class="icon"><use href="#browse"/></svg>127.0.0.1:80 (http)<br>durchsuchen</a>
                    <a class="action" href="#"><svg class="icon"><use href="#browse"/></svg>127.0.0.1:443 (https)<br>durchsuchen</a>
                    <hr>
                    <a class="action" href="#">Erweiterte Einstellungen...</a>
                    <hr>
                    <a class="action" href="#"><svg class="icon" viewBox="0 0 16 16"><use href="#appSmall" width="16" height="16"/><path d="M11 4l1 2.500 2.500-1-1.500 2.500 1.500 2-2.500 0-1 2.500-1-2.500-2.500 0 1.500-2-1.500-2.500 2.500 1z" fill="#f8a72c"/></svg>Anwendung über Katalog<br>installieren</a>
                    <hr>
                    <a class="action" href="#"><svg class="icon"><use href="#help"/></svg>Hilfe</a>
                </div>
            </aside>
        </main>

        <footer class="statusbar">
            <span>Bereit</span>
            <svg class="status-icon" viewBox="0 0 24 16"><use href="#serverGlobe" width="16" height="16"/><path d="M22 9h2M22 12h2M22 15h2M19 12h2M19 15h2" stroke="#999" stroke-width="1.500"/></svg>
        </footer>
    </div>
</body>
</html>
```
FILE: styles.css
```css
:root {
    --frame: #66cbea;
    --line: #a0a0a0;
    --link: #0f62c8;
    --red: #ed1c24;
}

*, *::before, *::after {
    box-sizing: border-box;
}

body {
    margin: 0;
    height: 100vh;
    display: flex;
    flex-direction: column;
    overflow: hidden;
    background: var(--frame);
    border-bottom: 1px solid #2b4a55;
    font-family: "Open Sans", "Noto Sans", sans-serif;
    font-size: 12px;
    line-height: 15px;
    color: #000;
}

h1, h2, h3, h4, ul {
    margin: 0;
    padding: 0;
    font-size: 12px;
    font-weight: normal;
    list-style: none;
}

button, input, select {
    font: inherit;
    color: inherit;
    padding: 0;
    border: 0;
    background: none;
}

svg {
    display: block;
    flex: none;
}

.sprite {
    position: absolute;
    width: 0;
    height: 0;
}

.icon { width: 16px; height: 16px; }
.icon-lg { width: 32px; height: 32px; }
.caret { width: 6px; height: 4px; }
.crumb { width: 5px; height: 8px; }
.chevron { width: 8px; height: 6px; }
.chevron.left { transform: rotate(-90deg); }
.chevron.right { transform: rotate(90deg); }
.chevron.down { transform: rotate(180deg); }

.icon-404 { font: bold 9px "Liberation Sans", sans-serif; }
.icon-ab { font: bold 12px "Liberation Serif", serif; fill: #a01818; }

/* Titelleiste */
.titlebar {
    display: grid;
    grid-template-columns: 1fr auto 1fr;
    align-items: start;
    height: 29px;
    padding: 0 5px 0 8px;
    flex: none;
}

.title-icon { margin-top: 6px; }

.title {
    font-size: 14px;
    line-height: 29px;
}

.window-buttons {
    display: flex;
    justify-self: end;
    height: 21px;
    border: 1px solid #3c4a50;
    border-top: 0;
}

.win-btn {
    display: flex;
    align-items: center;
    justify-content: center;
    width: 27px;
}

.win-btn + .win-btn { border-left: 1px solid #3c4a50; }
.win-btn.close { width: 46px; background: #c35b51; }

/* Fenster */
.window {
    flex: 1;
    min-height: 0;
    display: flex;
    flex-direction: column;
    margin: 0 7px 7px 6px;
    background: #e3e3e3;
    border-top: 1px solid #8fb2c8;
}

.navbar {
    display: flex;
    align-items: center;
    height: 33px;
    padding: 0 7px 2px 4px;
    background: #a5bedb;
    flex: none;
}

.history { width: 54px; height: 26px; }

.address {
    flex: 1;
    display: flex;
    align-items: center;
    gap: 9px;
    height: 25px;
    margin-left: 19px;
    padding-left: 7px;
    background: #e8eef7;
    border: 1px solid #66737f;
}

.tool {
    display: flex;
    align-items: center;
    gap: 3px;
}

.nav-tools {
    display: flex;
    gap: 7px;
    margin-left: 6px;
}

.help-tool {
    gap: 6px;
    padding-left: 4px;
    border-left: 1px solid #fff;
}

.menubar {
    display: flex;
    gap: 17px;
    height: 24px;
    padding-left: 15px;
    background: linear-gradient(#fff, #f0f0f0);
    flex: none;
}

.workspace {
    flex: 1;
    min-height: 0;
    display: flex;
    gap: 6px;
    padding: 1px 1px 2px;
}

.panel {
    border: 1px solid var(--line);
    background: #fff;
}

.panel-title {
    height: 23px;
    padding-left: 7px;
    line-height: 23px;
    font-weight: bold;
    background: var(--line);
    flex: none;
}

.divider {
    width: 2px;
    height: 16px;
    background: #a0a0a0;
}

/* Verbindungen */
.connections {
    width: 200px;
    display: flex;
    flex-direction: column;
    flex: none;
}

.tree-tools {
    display: flex;
    align-items: center;
    gap: 5px;
    height: 25px;
    padding-left: 2px;
    background: linear-gradient(#fff, #f0f0f0);
    border-bottom: 1px solid var(--line);
}

.tree-tools .tool { gap: 2px; }

.tree {
    flex: 1;
    min-height: 0;
    overflow: hidden;
    padding-left: 8px;
}

/* gepunktete Linien: nur bis zum letzten Kind jeder Ebene */
.tree li {
    --dots: repeating-linear-gradient(#888 0 1px, transparent 1px 2px);
    background: var(--dots) 4px 0 / 1px 100% no-repeat;
}

.tree li:last-child { background-size: 1px 9px; }
.tree-root > li:first-child { background-position: 4px 9px; }
.tree ul ul { margin-left: 19px; }

.row {
    display: flex;
    align-items: center;
    height: 18px;
    white-space: nowrap;
}

.twist {
    display: flex;
    align-items: center;
    width: 14px;
    height: 10px;
    background: repeating-linear-gradient(90deg, #888 0 1px, transparent 1px 2px) right 5px / 4px 1px no-repeat;
    flex: none;
}

.leaf .twist { background-size: 10px 1px; }
.twist svg { background: #fff; }
.opened { width: 7px; height: 7px; margin-left: 1px; }
.closed { width: 7px; height: 10px; margin-left: 1px; }

.name { padding: 0 3px; margin-left: 2px; }

.current {
    background: #f0f0f0;
    box-shadow: 0 0 0 1px #ddd;
}

/* rote Markierungen */
.marked,
.selected {
    position: relative;
}

.marked::after,
.selected::after {
    content: "";
    position: absolute;
    z-index: 2;
    border: 5px solid var(--red);
    pointer-events: none;
}

.marked::after {
    left: -17px;
    top: -6px;
    width: 110px;
    height: 30px;
}

.selected::after {
    left: -17px;
    top: -26px;
    width: 147px;
    height: 127px;
}

/* Bildlaufleisten */
.scroll-x, .scroll-y { display: flex; color: #606060; }
.scroll-x { height: 17px; }

.scroll-y {
    flex-direction: column;
    width: 17px;
    border: 1px solid #dadada;
}

.scroll-btn {
    display: flex;
    align-items: center;
    justify-content: center;
    width: 17px;
    height: 17px;
    background: #fff;
    border: 1px solid #ccc;
    flex: none;
}

.scroll-y .scroll-btn { width: 15px; }

.thumb {
    display: flex;
    align-items: center;
    justify-content: center;
    background: #dadada;
    border: 1px solid #a6a6a6;
}

.scroll-x .thumb { flex: 129; }
.scroll-x .track { flex: 36; border: solid #ddd; border-width: 1px 0; }
.scroll-y .thumb { flex: 364; }
.scroll-y .track { flex: 86; }

.grip {
    width: 8px;
    height: 7px;
    background: repeating-linear-gradient(90deg, #606060 0 2px, transparent 2px 3px);
}

.scroll-y .grip { background: repeating-linear-gradient(#606060 0 1px, transparent 1px 2px); }

/* Mitte */
.center {
    flex: 1;
    min-width: 0;
    display: flex;
    flex-direction: column;
}

.content {
    flex: 1;
    min-height: 0;
    display: flex;
    flex-direction: column;
    padding: 0 12px 12px;
}

.page-head {
    display: flex;
    align-items: center;
    gap: 17px;
    height: 52px;
    padding: 0 0 2px 1px;
    flex: none;
}

.page-title {
    font-size: 18px;
    line-height: 24px;
}

.filterbar {
    display: flex;
    align-items: center;
    height: 29px;
    padding-left: 6px;
    background: linear-gradient(#fff, #f0f0f0);
    border: 1px solid #eee;
    border-bottom-color: #999;
    white-space: nowrap;
    flex: none;
}

.filterbar label { flex: none; }
.filterbar .divider { width: 1px; margin: 0 4px; background: #888; }
.start { color: #888; margin: 0 4px 0 1px; }
.start .caret { margin-left: 4px; }

.combo {
    display: flex;
    align-items: center;
    height: 24px;
    margin: 0 3px 0 4px;
    padding-right: 3px;
    background: #fff;
}

.combo input,
.combo select {
    flex: 1;
    min-width: 0;
    height: 24px;
    padding-left: 4px;
    appearance: none;
    outline: 0;
}

.filter-combo { width: 120px; }
.group-combo { width: 116px; }

.feature-view {
    flex: 1;
    min-height: 0;
    display: flex;
    border: 1px solid #eee;
    border-top: 0;
}

.features {
    flex: 1;
    min-width: 0;
    overflow: hidden;
    padding-top: 1px;
}

.group { margin-bottom: 4px; }

.group-title {
    display: flex;
    align-items: center;
    gap: 5px;
    height: 20px;
    padding: 0 9px 2px 11px;
    color: #1c3f9c;
}

.group-title::after {
    content: "";
    flex: 1;
    height: 1px;
    background: #d8e6f4;
}

.group-title .chevron {
    order: 1;
    margin-left: 7px;
    color: #222;
}

.items {
    display: grid;
    grid-template-columns: repeat(auto-fill, 114px);
    grid-auto-rows: 75px;
}

.item {
    display: flex;
    flex-direction: column;
    align-items: center;
    align-self: start;
    gap: 3px;
    padding: 1px 0 0;
    border: 1px solid transparent;
}

.label {
    text-align: center;
    white-space: nowrap;
}

.selected {
    z-index: 1;
    background: #dcebfd;
    border: 1px dotted #333;
    outline: 1px solid #b4d3f5;
}

.view-tabs {
    display: flex;
    align-items: center;
    gap: 2px;
    height: 26px;
    padding-left: 6px;
    flex: none;
}

.view-tab {
    display: flex;
    align-items: center;
    gap: 3px;
    height: 20px;
    padding: 0 2px 0 1px;
    border: 1px solid transparent;
}

.view-tab.active {
    background: #fff;
    border-color: #3399ff;
}

/* Aktionen */
.actions {
    width: 200px;
    flex: none;
    background: linear-gradient(90deg, #fff, #e3e3e3);
}

.action-list { padding: 4px 3px 0 0; }

.action {
    display: grid;
    align-content: center;
    position: relative;
    min-height: 20px;
    padding-left: 29px;
    color: var(--link);
    text-decoration: none;
    white-space: nowrap;
}

.action .icon {
    position: absolute;
    left: 5px;
    top: 50%;
    margin-top: -8px;
}

.action-sub { color: #000; font-weight: bold; }

.action-list hr {
    width: auto;
    height: 1px;
    margin: 2px 0 2px 2px;
    border: 0;
    background: linear-gradient(90deg, #ddd, #808080 40%, #909090);
}

.action-head {
    display: flex;
    align-items: center;
    justify-content: space-between;
    height: 24px;
    margin: 3px 0 2px;
    padding: 0 10px 0 7px;
    background: linear-gradient(90deg, #fff, #f2f2f2);
    font-weight: bold;
}

.collapse {
    display: flex;
    align-items: center;
    justify-content: center;
    width: 15px;
    height: 15px;
    border: 1px solid #888;
    border-radius: 50%;
    background: #eee;
}

.statusbar {
    display: flex;
    align-items: center;
    justify-content: space-between;
    height: 23px;
    padding: 0 4px 0 5px;
    background: #f1f1f1;
    border-top: 1px solid #fff;
    flex: none;
}

.status-icon { width: 24px; height: 16px; }
```
